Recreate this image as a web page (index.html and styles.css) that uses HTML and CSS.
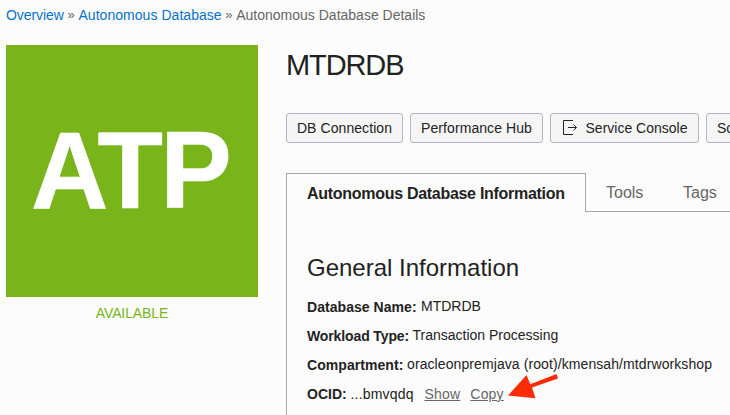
FILE: index.html
```html
<!DOCTYPE html>
<html lang="en">
<head>
<meta charset="utf-8">
<title>Autonomous Database Details</title>
<link rel="stylesheet" href="styles.css">
</head>
<body>
<nav class="breadcrumb"><a class="c1">Overview</a><span class="sep">»</span><a class="c2">Autonomous Database</a><span class="sep">»</span><span class="c3">Autonomous Database Details</span></nav>
<div class="layout">
  <aside class="side">
    <div class="tile"><span>ATP</span></div>
    <div class="status">AVAILABLE</div>
  </aside>
  <main class="main">
    <h1>MTDRDB</h1>
    <div class="actions">
      <button class="b1">DB Connection</button>
      <button class="b2">Performance Hub</button>
      <button class="b3"><svg width="16" height="16" viewBox="0 0 16 16"><path d="M11 .5H1.500V14.500H11M6 7.500H14.500M11.500 4.500L14.500 7.500L11.500 10.500"/></svg><span>Service Console</span></button>
      <button class="b4">Sc</button>
    </div>
    <div class="tabs">
      <div class="tab active"><span>Autonomous Database Information</span></div>
      <div class="tab tools">Tools</div>
      <div class="tab tags">Tags</div>
    </div>
    <section class="panel">
      <h2>General Information</h2>
      <div class="row"><b class="k1">Database Name:</b><span class="v1">MTDRDB</span></div>
      <div class="row"><b class="k2">Workload Type:</b><span class="v2">Transaction Processing</span></div>
      <div class="row"><b class="k3">Compartment:</b><span class="v3">oracleonpremjava (root)/kmensah/mtdrworkshop</span></div>
      <div class="row last"><b class="k4">OCID:</b><span class="v4">...bmvqdq</span><a class="show">Show</a><a class="copy">Copy</a></div>
    </section>
  </main>
</div>
<svg class="arrow" width="54" height="30" viewBox="0 0 54 30"><path d="M0 21.500L18.500 1L22.300 10.200L48.500 0L50 4.500L24 13.500L27.500 24.300Z"/></svg>
</body>
</html>
```
FILE: styles.css
```css
* { box-sizing: border-box; }
body {
  margin: 0;
  width: 730px;
  height: 415px;
  overflow: hidden;
  background: #fcfcfc;
  color: #222;
  font: 14px/20px "Liberation Sans", Arial, sans-serif;
}
.breadcrumb {
  display: flex;
  height: 45px;
  padding: 5px 0 0 6px;
  color: #666;
  white-space: nowrap;
}
.breadcrumb a { color: #0572ce; }
.c1 { letter-spacing: -.06px; }
.c2 { letter-spacing: .04px; }
.sep { width: 14.600px; text-align: center; font-size: 13px; }
.layout { display: flex; }
.side { flex: none; width: 252px; margin-left: 6px; }
.tile {
  display: flex;
  height: 252px;
  padding-left: 24.500px;
  background: #78b41a;
  color: #fff;
  font-size: 110px;
  font-weight: 700;
  line-height: 249px;
  letter-spacing: -3px;
  -webkit-text-stroke: .6px #fff;
}
.tile span { transform: scaleX(.975); transform-origin: left; }
.status { padding-top: 6px; color: #78b41a; text-align: center; letter-spacing: -.1px; }
.main { flex: none; width: 444px; margin-left: 28px; overflow: hidden; }
h1 { margin: 0; height: 68px; font-size: 29px; line-height: 41px; font-weight: 400; letter-spacing: -1.100px; }
.actions { display: flex; gap: 7px; height: 60px; }
button {
  display: flex;
  flex: none;
  align-items: center;
  justify-content: center;
  height: 30px;
  padding: 0;
  border: 1px solid #b1b7c4;
  border-radius: 3px;
  background: #f5f5f5;
  color: #222;
  font: 14px/20px "Liberation Sans", Arial, sans-serif;
  white-space: nowrap;
}
button svg { margin-right: 8px; fill: none; stroke: #222; stroke-width: 1; }
.b1 { width: 117px; letter-spacing: .08px; }
.b2 { width: 133px; letter-spacing: .07px; }
.b3 { width: 149px; }
.b4 { width: 60px; justify-content: flex-start; padding-left: 10px; }
.tabs { display: flex; height: 39px; font-size: 16px; line-height: 39px; white-space: nowrap; color: #666; }
.tab { border-bottom: 1px solid #a5a5a8; }
.tab.active {
  width: 300px;
  padding: 0 0 0 20px;
  border: 1px solid #a5a5a8;
  border-bottom: 0;
  color: #222;
  font-weight: 700;
  letter-spacing: -.29px;
}
.tools { width: 77px; padding-left: 20px; }
.tags { flex: 1; padding-left: 20px; }
.panel { height: 210px; border-left: 1px solid #a5a5a8; padding: 41px 0 0 20px; }
h2 { margin: 0 0 9px; font-size: 24px; line-height: 30px; font-weight: 400; }
.row { display: flex; height: 29px; line-height: 29px; white-space: nowrap; }
.row b { padding-top: 1px; }
.row.last { padding-top: 1px; }
.row.last b { padding-top: 0; }
.row a { color: #666; text-decoration: underline; margin-left: 10px; }
.k1 { width: 114px; letter-spacing: .05px; }
.k2 { width: 105.500px; letter-spacing: -.12px; }
.k3 { width: 100px; letter-spacing: .06px; }
.k4 { width: 43.500px; }
.v3 { letter-spacing: .09px; }
.v4 { letter-spacing: .2px; width: 64px; }
.show { letter-spacing: .2px; }
.copy { letter-spacing: .2px; }
.arrow { position: absolute; left: 508px; top: 374px; fill: #ff2b06; }
```
